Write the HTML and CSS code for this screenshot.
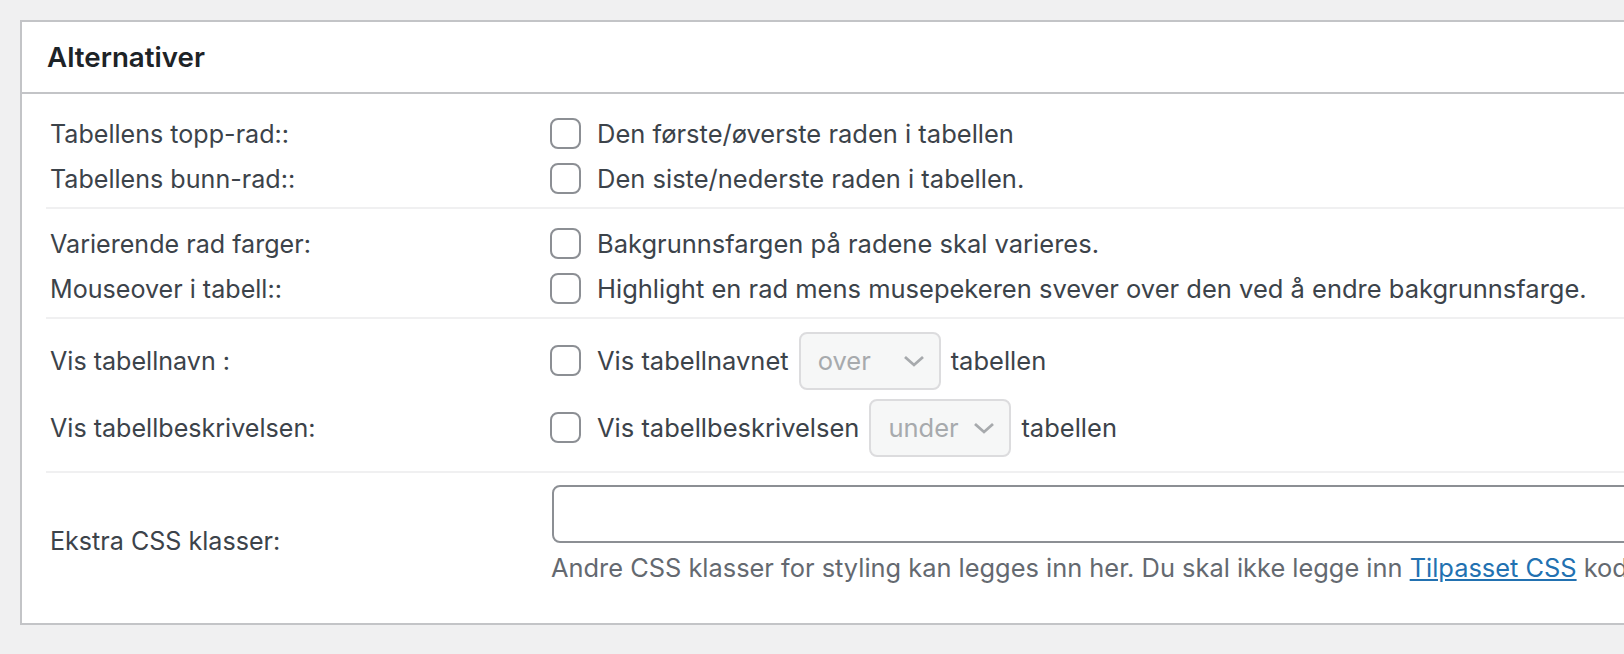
FILE: index.html
```html
<!DOCTYPE html>
<html>
<head>
<title>Alternativer</title>
<link rel="stylesheet" href="styles.css">
</head>
<body>

<div class="postbox">
  <div class="postbox-header">
    <h2>Alternativer</h2>
  </div>

  <div class="inside">
    <div class="option-group first">
      <div class="option-row">
        <div class="option-label">Tabellens topp-rad::</div>
        <label class="option-field"><span class="checkbox"></span>Den første/øverste raden i tabellen</label>
      </div>
      <div class="option-row">
        <div class="option-label">Tabellens bunn-rad::</div>
        <label class="option-field"><span class="checkbox"></span>Den siste/nederste raden i tabellen.</label>
      </div>
    </div>

    <div class="option-group">
      <div class="option-row">
        <div class="option-label">Varierende rad farger:</div>
        <label class="option-field"><span class="checkbox"></span>Bakgrunnsfargen på radene skal varieres.</label>
      </div>
      <div class="option-row">
        <div class="option-label">Mouseover i tabell::</div>
        <label class="option-field"><span class="checkbox"></span>Highlight en rad mens musepekeren svever over den ved å endre bakgrunnsfarge.</label>
      </div>
    </div>

    <div class="option-group selects">
      <div class="option-row tall">
        <div class="option-label">Vis tabellnavn&nbsp;:</div>
        <div class="option-field">
          <span class="checkbox"></span>Vis tabellnavnet
          <span class="select"><span>over</span>
            <svg width="22" height="14" viewBox="0 0 22 14"><path d="M2 3l9 8 9-8" fill="none" stroke="#a7aaad" stroke-width="2.8"/></svg>
          </span>
          tabellen
        </div>
      </div>
      <div class="option-row tall">
        <div class="option-label">Vis tabellbeskrivelsen:</div>
        <div class="option-field">
          <span class="checkbox"></span>Vis tabellbeskrivelsen
          <span class="select"><span>under</span>
            <svg width="22" height="14" viewBox="0 0 22 14"><path d="M2 3l9 8 9-8" fill="none" stroke="#a7aaad" stroke-width="2.8"/></svg>
          </span>
          tabellen
        </div>
      </div>
    </div>

    <div class="option-group last">
      <div class="option-row extra">
        <div class="option-label">Ekstra CSS klasser:</div>
        <div class="option-field column">
          <input type="text" class="text-input">
          <p class="description">Andre CSS klasser for styling kan legges inn her. Du skal ikke legge inn <a href="#">Tilpasset CSS</a> kode her.</p>
        </div>
      </div>
    </div>
  </div>
</div>

</body>
</html>
```

FILE: styles.css
```css
body {
  margin: 0;
  background: #f0f0f1;
  font-family: Inter, "Open Sans", sans-serif;
  color: #3c434a;
  overflow: hidden;
}
.postbox {
  margin: 20px 0 0 20px;
  width: 1760px;
  background: #fff;
  border: 2px solid #c3c4c7;
}
.postbox-header {
  height: 70px;
  display: flex;
  align-items: center;
  padding-left: 25px;
  border-bottom: 2px solid #c3c4c7;
}
.postbox-header h2 {
  margin: 0;
  font-size: 27.7px;
  font-weight: 600;
  color: #1d2327;
}
.inside {
  padding: 0 24px;
}
.option-group {
  padding: 12px 0 6px;
  border-bottom: 2px solid #f0f0f1;
}
.option-group.first {
  padding-top: 17px;
}
.option-group.selects {
  padding: 8px 0 10px;
}
.option-group.last {
  padding: 12px 0 38px;
  border-bottom: none;
}
.option-row {
  display: flex;
  align-items: center;
  height: 45px;
  font-size: 25.5px;
}
.option-row.tall {
  height: 67px;
}
.option-row.extra {
  height: auto;
  align-items: flex-start;
}
.option-label {
  width: 500px;
  padding-left: 4px;
  flex-shrink: 0;
  font-size: 25.1px;
}
.extra .option-label {
  padding-top: 41px;
}
.option-field {
  display: flex;
  align-items: center;
  white-space: nowrap;
}
.option-field.column {
  flex-direction: column;
  align-items: flex-start;
  flex: 1;
}
.checkbox {
  width: 27px;
  height: 27px;
  border: 2px solid #8c8f94;
  border-radius: 8px;
  background: #fff;
  margin-right: 16px;
  flex-shrink: 0;
}
.select {
  display: flex;
  align-items: center;
  justify-content: space-between;
  box-sizing: border-box;
  width: 142px;
  height: 58px;
  margin: 0 10px;
  padding: 0 14px 0 17px;
  background: #f6f7f7;
  border: 2px solid #dcdcde;
  border-radius: 8px;
  color: #a7aaad;
}
.text-input {
  box-sizing: border-box;
  width: 1140px;
  height: 58px;
  margin: 0 0 0 2px;
  border: 2px solid #8c8f94;
  border-radius: 8px;
  background: #fff;
}
.description {
  margin: 8px 0 0 1px;
  line-height: 34px;
  font-size: 25.4px;
  color: #646970;
  white-space: nowrap;
}
.description a {
  color: #2271b1;
}
```
